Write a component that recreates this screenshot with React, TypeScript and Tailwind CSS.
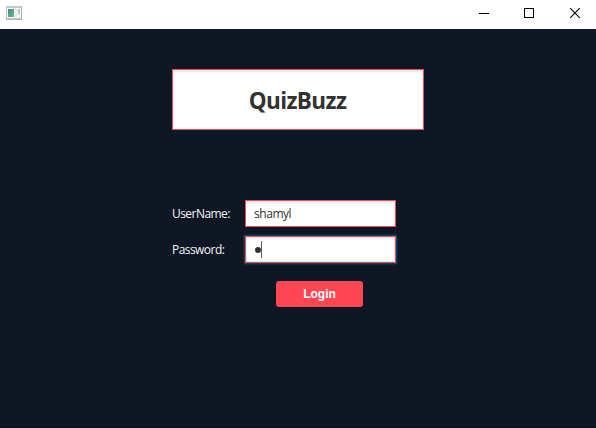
import React from "react";

function TitleBar() {
  return (
    <header className="flex h-[29px] items-start justify-between bg-white">
      <svg className="ml-1.5 mt-1.5" width="16" height="14" viewBox="0 0 16 14" shapeRendering="crispEdges">
        <defs>
          <linearGradient id="pane" x1="0" y1="0" x2="0.6" y2="1">
            <stop offset="0" stopColor="#477fae" />
            <stop offset="1" stopColor="#5fb679" />
          </linearGradient>
        </defs>
        <rect x="0" y="0" width="16" height="14" fill="#c4c8cb" />
        <rect x="1" y="2" width="14" height="10" fill="#fafafa" />
        <rect x="15" y="0" width="1" height="14" fill="#aeb2b5" />
        <rect x="0" y="13" width="16" height="1" fill="#aeb2b5" />
        <rect x="2" y="3" width="6" height="8" fill="url(#pane)" />
        <rect x="9" y="3" width="2" height="8" fill="#e3e4e6" />
        <rect x="12" y="3" width="2" height="5" fill="url(#pane)" opacity="0.5" />
        <rect x="12" y="8" width="2" height="3" fill="#ececec" />
      </svg>
      <svg width="136" height="29" viewBox="0 0 136 29" fill="none" stroke="#000">
        <path d="M19 13.5h10M64.500 8.500h9v9h-9z" shapeRendering="crispEdges" />
        <path d="M110.200 8.200l9.600 9.600M119.800 8.200l-9.600 9.600" strokeWidth="1.100" />
      </svg>
    </header>
  );
}

function Field({ label, focused, children }: { label: string; focused?: boolean; children: React.ReactNode }) {
  return (
    <div className="flex h-[27px] w-56 items-center">
      <span className="w-[73px] text-[12px] leading-4 tracking-[-0.55px] text-[#f4f5f7]">{label}</span>
      <div
        className={
          focused
            ? "flex h-[27px] w-[151px] items-center border border-[#ff4754] bg-white pl-2 shadow-[0_0_2px_1px_#075575,inset_0_0_0_1px_#d5edf7,inset_0_2px_2px_#e1eff5]"
            : "flex h-[27px] w-[151px] items-center border border-[#ff4754] bg-white pl-2 shadow-[inset_0_2px_2px_#e8e8e8]"
        }
      >
        {children}
      </div>
    </div>
  );
}

export default function App() {
  return (
    <div className="flex h-[428px] w-[596px] flex-col overflow-hidden bg-[#0f1624] font-['Open_Sans','Noto_Sans',sans-serif]">
      <TitleBar />
      <main className="flex flex-1 flex-col items-start border-b border-[#0a0f19] pl-[172px] pt-10">
        <h1 className="flex h-[61px] w-[252px] items-center justify-center border border-[#f04d58] bg-white pr-px pt-1 text-[22.5px] font-bold leading-none tracking-[-0.6px] text-[#323232] shadow-[inset_0_2px_2px_#e8e8e8]">
          QuizBuzz
        </h1>
        <form className="mt-[70px] flex flex-col gap-[9px]">
          <Field label="UserName:">
            <span className="text-[12px] leading-4 tracking-[-0.45px] text-[#323232]">shamyl</span>
          </Field>
          <Field label="Password:" focused>
            <span className="ml-px size-[6px] rounded-full bg-[#323232]" />
            <span className="h-[17px] w-px bg-[#5f5f5f]" />
          </Field>
          <button
            type="button"
            className="ml-[104px] mt-[9px] flex h-[26px] w-[87px] items-center justify-center rounded-[3px] bg-[#ff4754] font-['Liberation_Sans',Arial,sans-serif] text-[12px] font-bold text-white"
          >
            Login
          </button>
        </form>
      </main>
    </div>
  );
}
